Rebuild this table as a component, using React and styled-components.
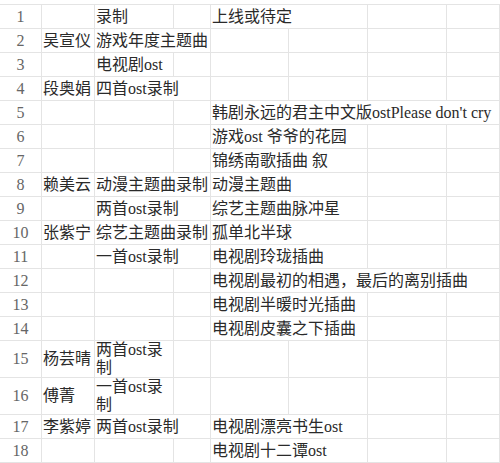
import React from 'react';
import styled, { createGlobalStyle } from 'styled-components';

const Global = createGlobalStyle`
  html, body { margin: 0; padding: 0; background: #fff; overflow: hidden; }
  body { width: 500px; height: 463px; }
`;

const Sheet = styled.div`
  width: 500px;
  margin-top: 4px;
  border-top: 1px solid #e4e4e4;
  font-family: "Liberation Serif", "Noto Sans CJK SC", serif;
  font-size: 16px;
  color: #2a2a2a;
  overflow: hidden;
`;

const Row = styled.div`
  display: grid;
  grid-template-columns: 42px 53px 79px 37px 78px 79px 79px 1fr;
  min-height: ${p => (p.$tall ? 37 : 24)}px;
  box-sizing: border-box;
  border-bottom: 1px solid #e4e4e4;
`;

const Cell = styled.div`
  grid-column: span ${p => p.$span || 1};
  display: flex;
  align-items: center;
  box-sizing: border-box;
  padding: 0 1px;
  border-right: 1px solid #e4e4e4;
  white-space: ${p => (p.$wrap ? 'normal' : 'nowrap')};
  line-height: ${p => (p.$wrap ? '18px' : '20px')};
  min-width: 0;
`;

const NumCell = styled(Cell)`
  justify-content: center;
  color: #666;
  padding: 0;
`;

const rows = [
  { n: 1, b: '', c: '录制', cs: 1, e: '上线或待定', es: 2 },
  { n: 2, b: '吴宣仪', c: '游戏年度主题曲', cs: 2, e: '', es: 1 },
  { n: 3, b: '', c: '电视剧ost', cs: 1, e: '', es: 1 },
  { n: 4, b: '段奥娟', c: '四首ost录制', cs: 2, e: '', es: 1 },
  { n: 5, b: '', c: '', cs: 1, e: "韩剧永远的君主中文版ostPlease don't cry", es: 4 },
  { n: 6, b: '', c: '', cs: 1, e: '游戏ost 爷爷的花园', es: 2 },
  { n: 7, b: '', c: '', cs: 1, e: '锦绣南歌插曲 叙', es: 2 },
  { n: 8, b: '赖美云', c: '动漫主题曲录制', cs: 2, e: '动漫主题曲', es: 2 },
  { n: 9, b: '', c: '两首ost录制', cs: 2, e: '综艺主题曲脉冲星', es: 2 },
  { n: 10, b: '张紫宁', c: '综艺主题曲录制', cs: 2, e: '孤单北半球', es: 2 },
  { n: 11, b: '', c: '一首ost录制', cs: 2, e: '电视剧玲珑插曲', es: 2 },
  { n: 12, b: '', c: '', cs: 1, e: '电视剧最初的相遇，最后的离别插曲', es: 4 },
  { n: 13, b: '', c: '', cs: 1, e: '电视剧半暖时光插曲', es: 2 },
  { n: 14, b: '', c: '', cs: 1, e: '电视剧皮囊之下插曲', es: 2 },
  { n: 15, b: '杨芸晴', c: '两首ost录制', cs: 1, wrap: true, e: '', es: 1 },
  { n: 16, b: '傅菁', c: '一首ost录制', cs: 1, wrap: true, e: '', es: 1 },
  { n: 17, b: '李紫婷', c: '两首ost录制', cs: 2, e: '电视剧漂亮书生ost', es: 2 },
  { n: 18, b: '', c: '', cs: 1, e: '电视剧十二谭ost', es: 2 },
];

function SheetRow({ r }) {
  const rest = 4 - r.es;
  return (
    <Row $tall={r.wrap}>
      <NumCell>{r.n}</NumCell>
      <Cell>{r.b}</Cell>
      <Cell $span={r.cs} $wrap={r.wrap}>{r.c}</Cell>
      {r.cs === 1 && <Cell />}
      <Cell $span={r.es}>{r.e}</Cell>
      {Array.from({ length: rest }).map((_, i) => (
        <Cell key={i} />
      ))}
    </Row>
  );
}

export default function App() {
  return (
    <>
      <Global />
      <Sheet>
        {rows.map(r => (
          <SheetRow key={r.n} r={r} />
        ))}
      </Sheet>
    </>
  );
}
